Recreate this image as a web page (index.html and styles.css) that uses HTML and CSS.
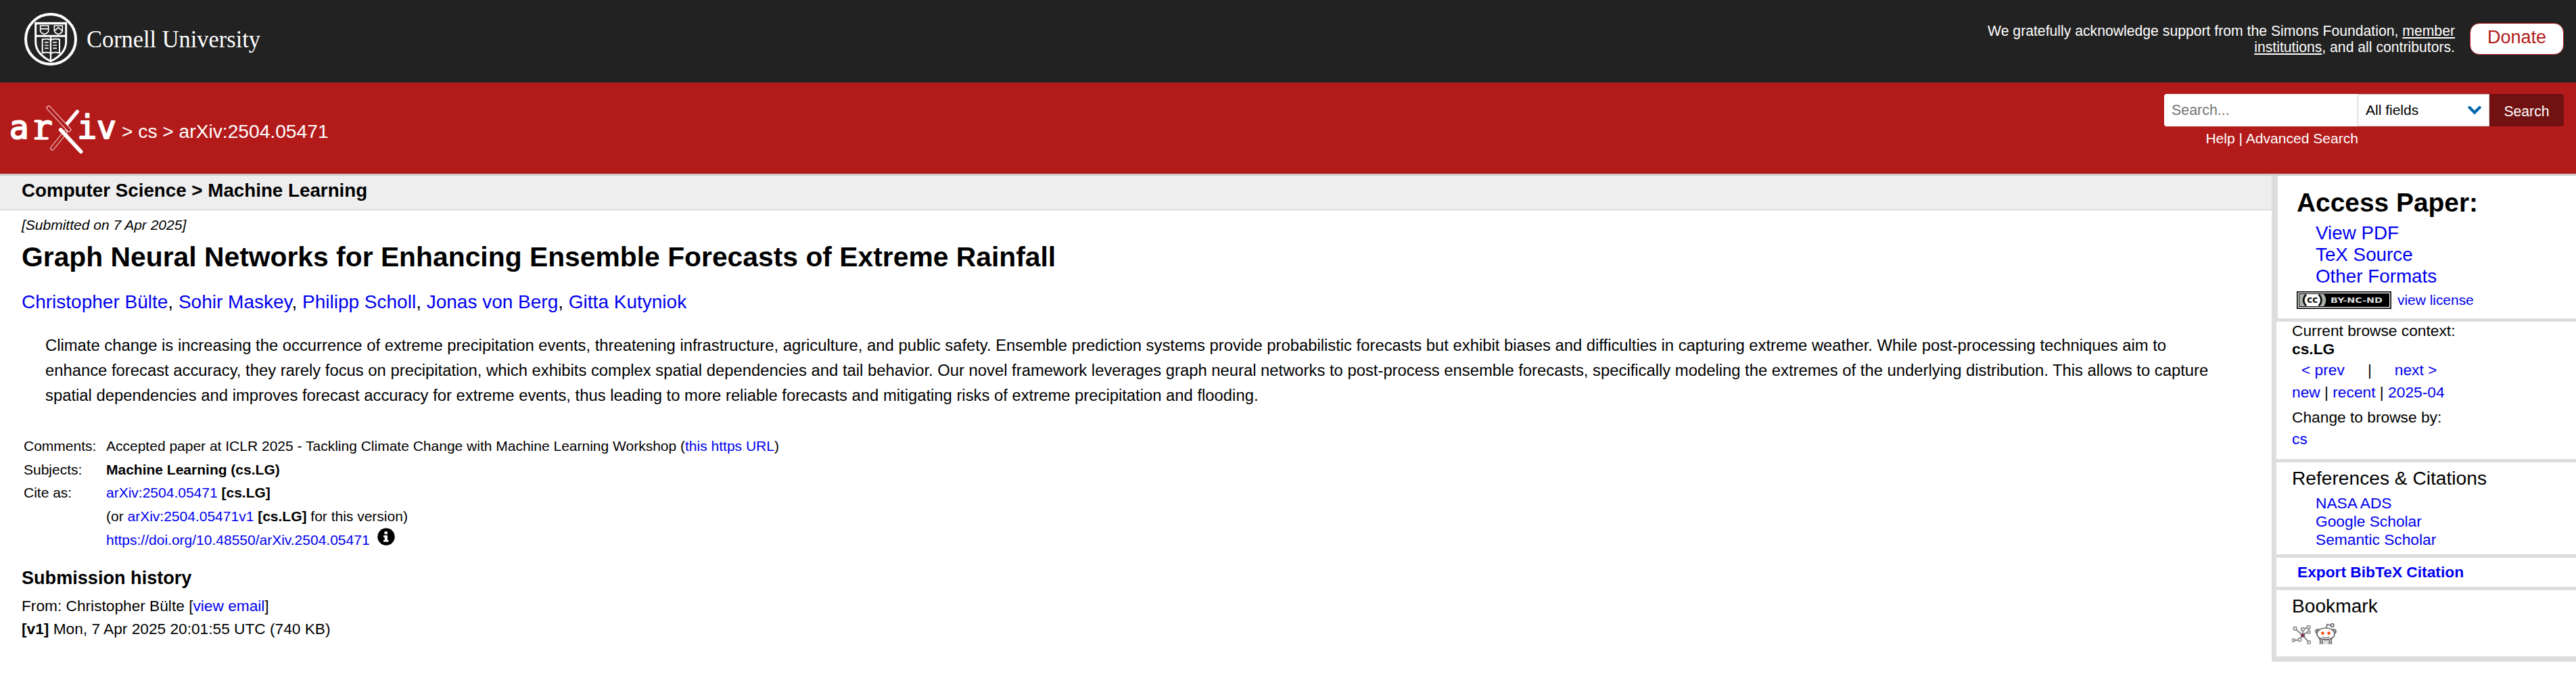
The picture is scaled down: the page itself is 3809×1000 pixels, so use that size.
FILE: index.html
```html
<!DOCTYPE html>
<html lang="en">
<head>
<meta charset="utf-8">
<title>Graph Neural Networks for Enhancing Ensemble Forecasts of Extreme Rainfall</title>
<link rel="stylesheet" href="styles.css">
</head>
<body>
<header>
  <div class="cornell-bar">
    <svg class="cornell-logo" width="380" height="95" viewBox="0 0 1140 285" role="img" aria-label="Cornell University">
      <g fill="none" stroke="#fff">
        <circle cx="165" cy="144" r="111" stroke-width="12"/>
        <path stroke-width="9" d="M98 73H233V156C233 196 205 222 165 242C125 222 98 196 98 156Z"/>
        <path stroke-width="9" d="M98 74H233M98 130H233"/>
        <path stroke-width="7" d="M165 130V242"/>
        <path stroke-width="6" d="M128 145C142 142 158 143 165 148C173 143 190 142 204 145V205C190 202 173 203 165 207C158 203 142 202 128 205Z"/>
        <path stroke-width="5" d="M138 158H155M138 171H155M138 184H155M175 158H192M175 171H192M175 184H192"/>
        <path stroke-width="5" d="M119 84H155V108Q152 117 137 122Q122 117 119 108ZM119 98H155M181 84H217V108Q214 117 199 122Q184 117 181 108ZM183 106L199 92L215 106"/>
      </g>
      <text class="cornell-name" x="324" y="180" textLength="771" lengthAdjust="spacingAndGlyphs">Cornell University</text>
    </svg>
    <div class="support">
      <p class="support-text">We gratefully acknowledge support from the Simons Foundation, <a href="#">member<br>institutions</a>, and all contributors.</p>
      <a class="donate" href="#">Donate</a>
    </div>
  </div>
  <div class="brand-bar">
    <div class="breadcrumbs">
      <svg class="arxiv-logo" width="176" height="100" viewBox="0 0 528 300" role="img" aria-label="arXiv">
        <text class="logo-text" y="196" x="41 146 343 429">ariv</text>
        <path d="M157 194H210M157 118H178" stroke="#fff" stroke-width="12" stroke-linecap="round"/>
        <g fill="none" stroke-linecap="round">
          <path d="M343 75L293 135" stroke="#fff" stroke-width="16"/>
          <path d="M232 238L290 166" stroke="#fff" stroke-width="18"/>
          <path d="M232 238L290 166" stroke="#b31b1b" stroke-width="13"/>
          <path d="M216 59L306 156" stroke="#fff" stroke-width="19"/>
          <path d="M216 59L306 156" stroke="#b31b1b" stroke-width="14"/>
          <path d="M269 156L359 253" stroke="#fff" stroke-width="17"/>
        </g>
      </svg>
      <span class="crumb">&gt; cs &gt; arXiv:2504.05471</span>
    </div>
    <form class="search">
      <div class="search-row">
        <input class="search-input" type="text" placeholder="Search..." aria-label="Search term">
        <div class="search-select"><span>All fields</span>
          <svg width="20" height="14" viewBox="0 0 20 14"><path d="M2.5 3L10 10.5L17.500 3" fill="none" stroke="#0068ac" stroke-width="4.200" stroke-linecap="round"/></svg>
        </div>
        <button class="search-button" type="button">Search</button>
      </div>
      <p class="search-help"><a href="#">Help</a> | <a href="#">Advanced Search</a></p>
    </form>
  </div>
</header>
<main>
  <article>
    <div class="subheader">Computer Science &gt; Machine Learning</div>
    <div class="paper">
      <p class="dateline">[Submitted on 7 Apr 2025]</p>
      <h1>Graph Neural Networks for Enhancing Ensemble Forecasts of Extreme Rainfall</h1>
      <p class="authors"><a href="#">Christopher Bülte</a>, <a href="#">Sohir Maskey</a>, <a href="#">Philipp Scholl</a>, <a href="#">Jonas von Berg</a>, <a href="#">Gitta Kutyniok</a></p>
      <blockquote>Climate change is increasing the occurrence of extreme precipitation events, threatening infrastructure, agriculture, and public safety. Ensemble prediction systems provide probabilistic forecasts but exhibit biases and difficulties in capturing extreme weather. While post-processing techniques aim to enhance forecast accuracy, they rarely focus on precipitation, which exhibits complex spatial dependencies and tail behavior. Our novel framework leverages graph neural networks to post-process ensemble forecasts, specifically modeling the extremes of the underlying distribution. This allows to capture spatial dependencies and improves forecast accuracy for extreme events, thus leading to more reliable forecasts and mitigating risks of extreme precipitation and flooding.</blockquote>
      <dl class="meta">
        <dt>Comments:</dt><dd>Accepted paper at ICLR 2025 - Tackling Climate Change with Machine Learning Workshop (<a href="#">this https URL</a>)</dd>
        <dt>Subjects:</dt><dd><b>Machine Learning (cs.LG)</b></dd>
        <dt>Cite as:</dt><dd><a href="#">arXiv:2504.05471</a> <b>[cs.LG]</b></dd>
        <dd>(or <a href="#">arXiv:2504.05471v1</a> <b>[cs.LG]</b> for this version)</dd>
        <dd class="doi"><a href="#">https://doi.org/10.48550/arXiv.2504.05471</a>
          <svg class="info" width="26" height="26" viewBox="0 0 26 26"><circle cx="13" cy="13" r="12.700"/><path fill="#fff" d="M10.500 5.300h4.400v4h-4.400zM9 11h6v7h1.600v2.500H9V18h1.700v-4.500H9z"/></svg>
        </dd>
      </dl>
      <h2>Submission history</h2>
      <p class="history">From: Christopher Bülte [<a href="#">view email</a>]<br><b>[v1]</b> Mon, 7 Apr 2025 20:01:55 UTC (740 KB)</p>
    </div>
  </article>
  <aside>
    <section class="access">
      <h2>Access Paper:</h2>
      <ul><li><a href="#">View PDF</a></li><li><a href="#">TeX Source</a></li><li><a href="#">Other Formats</a></li></ul>
      <div class="license">
        <svg width="140" height="26" viewBox="0 0 420 78" role="img" aria-label="CC BY-NC-ND">
          <rect width="420" height="78"/>
          <rect x="5" y="5" width="410" height="68" fill="#fff"/>
          <rect x="9" y="9" width="402" height="60"/>
          <path d="M12 12H120Q140 39 120 66H12Z" fill="#abb1aa"/>
          <path d="M44 12H96Q118 39 96 66H44Q22 39 44 12Z" fill="#fff"/>
          <path d="M42 14Q19 39 42 64M98 14Q121 39 98 64" fill="none" stroke="#111" stroke-width="8"/>
          <text class="cc" x="46" y="50" textLength="48" lengthAdjust="spacingAndGlyphs">cc</text>
          <text class="cc-terms" x="150" y="51" textLength="231" lengthAdjust="spacingAndGlyphs">BY-NC-ND</text>
        </svg>
        <a href="#">view license</a>
      </div>
    </section>
    <section class="browse">
      <p>Current browse context:</p>
      <p><b>cs.LG</b></p>
      <p class="prevnext"><a href="#">&lt; prev</a><span>|</span><a href="#">next &gt;</a></p>
      <p class="list"><a href="#">new</a> | <a href="#">recent</a> | <a href="#">2025-04</a></p>
      <p class="change">Change to browse by:</p>
      <p class="list"><a href="#">cs</a></p>
    </section>
    <section class="refs">
      <h3>References &amp; Citations</h3>
      <ul><li><a href="#">NASA ADS</a></li><li><a href="#">Google Scholar</a></li><li><a href="#">Semantic Scholar</a></li></ul>
    </section>
    <section class="export"><a href="#">Export BibTeX Citation</a></section>
    <section class="bookmark">
      <h3>Bookmark</h3>
      <div class="bookmark-icons">
        <svg width="28" height="28" viewBox="0 0 84 84" fill="none" stroke="#8a8a8a" stroke-width="6">
          <path d="M48 45L18 19M48 45L48 26M55 16L67 10M48 45L74 74M48 45L36 58M26 66L14 66M52 39L72 30L76 14"/>
          <g fill="#fff" stroke-width="5"><circle cx="14" cy="14" r="7"/><circle cx="48" cy="18" r="7"/><circle cx="74" cy="8" r="7"/><circle cx="75" cy="30" r="6"/><circle cx="34" cy="64" r="7"/><circle cx="7" cy="66" r="6"/><circle cx="76" cy="76" r="7"/></g>
          <rect x="40" y="38" width="16" height="14" fill="#8f2558" stroke="#777" stroke-width="3"/>
        </svg>
        <svg width="32" height="31" viewBox="0 0 96 93" fill="#fff" stroke="#666" stroke-width="5">
          <circle cx="12" cy="36" r="9" fill="#bbb"/><circle cx="84" cy="36" r="9" fill="#bbb"/>
          <path d="M22 93Q26 78 20 68H75Q70 78 74 93M32 93V76M64 93V76" fill="#ddd"/>
          <path d="M50 22L54 5L70 9" fill="none"/><circle cx="77" cy="9" r="7"/>
          <ellipse cx="48" cy="47" rx="39" ry="26"/>
          <path d="M32 60Q48 71 64 60" fill="none" stroke-width="4"/>
          <g fill="#ff4500" stroke="#ffb199" stroke-width="2"><circle cx="34" cy="44" r="7"/><circle cx="62" cy="44" r="7"/></g>
        </svg>
      </div>
    </section>
  </aside>
</main>
</body>
</html>
```
FILE: styles.css
```css
* { box-sizing: border-box; }
body {
  margin: 0;
  background: #fff;
  color: #000;
  font-family: "Liberation Sans", Arial, sans-serif;
}
h1, h2, h3, p, ul, dl, dd, blockquote { margin: 0; padding: 0; }
ul { list-style: none; }
a { color: #00e; text-decoration: none; }
svg { display: block; flex: none; }

.cornell-bar {
  display: flex;
  justify-content: space-between;
  height: 122px;
  padding: 10px 18px 0 20px;
  background: #222;
}
.cornell-name {
  fill: #fff;
  font-family: "Liberation Serif", serif;
  font-size: 108px;
}
.support { display: flex; align-items: flex-start; gap: 22px; padding-top: 24px; }
.support-text {
  color: #fff;
  font-size: 21.2px;
  line-height: 24px;
  text-align: right;
}
.support-text a { color: #fff; text-decoration: underline; }
.donate {
  width: 139px;
  height: 47px;
  border: 1px solid #b31b1b;
  border-radius: 14px;
  background: #fff;
  color: #b31b1b;
  font-size: 27px;
  line-height: 41px;
  text-align: center;
}

.brand-bar {
  display: flex;
  justify-content: space-between;
  height: 138px;
  border-bottom: 3px solid #ccc;
  background: #b31b1b;
}
.breadcrumbs { display: flex; gap: 4px; padding-top: 18px; }
.logo-text {
  fill: #fff;
  stroke: #fff;
  stroke-width: 6px;
  stroke-linejoin: round;
  font-family: "DejaVu Sans Mono", monospace;
  font-size: 144px;
}
.crumb { padding-top: 37px; color: #fff; font-size: 28.2px; line-height: 34px; }
.search { width: 591px; padding: 17px 0 0; margin-right: 18px; }
.search-row { display: flex; height: 48px; }
.search-input {
  width: 286px;
  padding: 0 11px;
  border: 0;
  border-radius: 4px 0 0 4px;
  background: #fff;
  font: 21.4px/46px "Liberation Sans", Arial, sans-serif;
}
.search-input::placeholder { color: #757575; }
.search-select {
  display: flex;
  justify-content: space-between;
  align-items: center;
  width: 195px;
  padding: 0 11px;
  border: 1px solid #ccc;
  background: #fff;
  font-size: 21px;
}
.search-button {
  width: 110px;
  padding: 4px 0 0;
  border: 0;
  border-radius: 0 4px 4px 0;
  background: #711111;
  color: #fff;
  font: 21.16px/40px "Liberation Sans", Arial, sans-serif;
}
.search-help {
  width: 287px;
  padding-top: 4px;
  color: #fff;
  font-size: 21.07px;
  line-height: 28px;
  text-align: right;
}
.search-help a { color: #fff; }

main { display: flex; align-items: flex-start; }
article { width: 3359px; }
.subheader {
  height: 51px;
  padding-left: 32px;
  border-bottom: 1px solid #ccc;
  background: #eee;
  font-size: 27.76px;
  font-weight: bold;
  line-height: 43px;
}
.paper { padding: 7px 65px 0 32px; }
.dateline { font-size: 21px; font-style: italic; line-height: 30px; }
h1 { margin-top: 8px; font-size: 40.85px; line-height: 48px; }
.authors { margin-top: 26px; font-size: 28px; line-height: 34px; }
blockquote { margin: 28px 0 0 35px; font-size: 23.825px; line-height: 37px; }
.meta {
  display: grid;
  grid-template-columns: 122px auto;
  grid-template-rows: 35px 34px 35px 35px 37px;
  margin: 39px 0 0 3px;
  font-size: 21px;
  line-height: 35px;
}
.meta dd { grid-column: 2; }
.doi { display: flex; gap: 11px; }
.info { margin-top: 0; }
.paper h2 { margin-top: 21px; font-size: 27.1px; line-height: 32px; }
.history { margin-top: 8px; font-size: 22.7px; line-height: 34px; }

aside {
  flex: 1;
  border-left: 7px solid #ddd;
  border-bottom: 8px solid #ddd;
  font-size: 22.75px;
}
aside section { padding-left: 23px; border-bottom: 5px solid #ddd; }
aside section:last-child { border-bottom: 0; }
aside .access { height: 216px; padding: 17px 0 0 28px; border-left: 2px solid #ddd; }
.access h2 { font-size: 38.9px; line-height: 46px; }
.access ul { padding: 6px 0 0 28px; font-size: 27.8px; line-height: 32px; }
.license { display: flex; gap: 9px; padding-top: 6px; font-size: 20.92px; line-height: 26px; }
.cc { fill: #111; font: bold 40px "DejaVu Sans", sans-serif; }
.cc-terms { fill: #ddd; font: bold 33px "DejaVu Sans", sans-serif; }
.browse { height: 208px; line-height: 27px; }
.prevnext { display: flex; gap: 34px; padding: 3px 0 0 14px; line-height: 29px; }
.list { padding-top: 2px; line-height: 32px; }
.change { padding-top: 5px; line-height: 32px; }
.change + .list { padding-top: 0; }
.refs { height: 141px; padding-top: 6px; }
aside h3 { font-size: 28.17px; font-weight: normal; line-height: 34px; }
.refs ul { padding: 7px 0 0 35px; line-height: 27px; }
aside .export { height: 48px; padding-left: 31px; font-weight: bold; line-height: 42px; }
.bookmark { height: 98px; padding-top: 6px; }
.bookmark-icons { display: flex; align-items: flex-end; gap: 6px; padding-top: 9px; }
```
